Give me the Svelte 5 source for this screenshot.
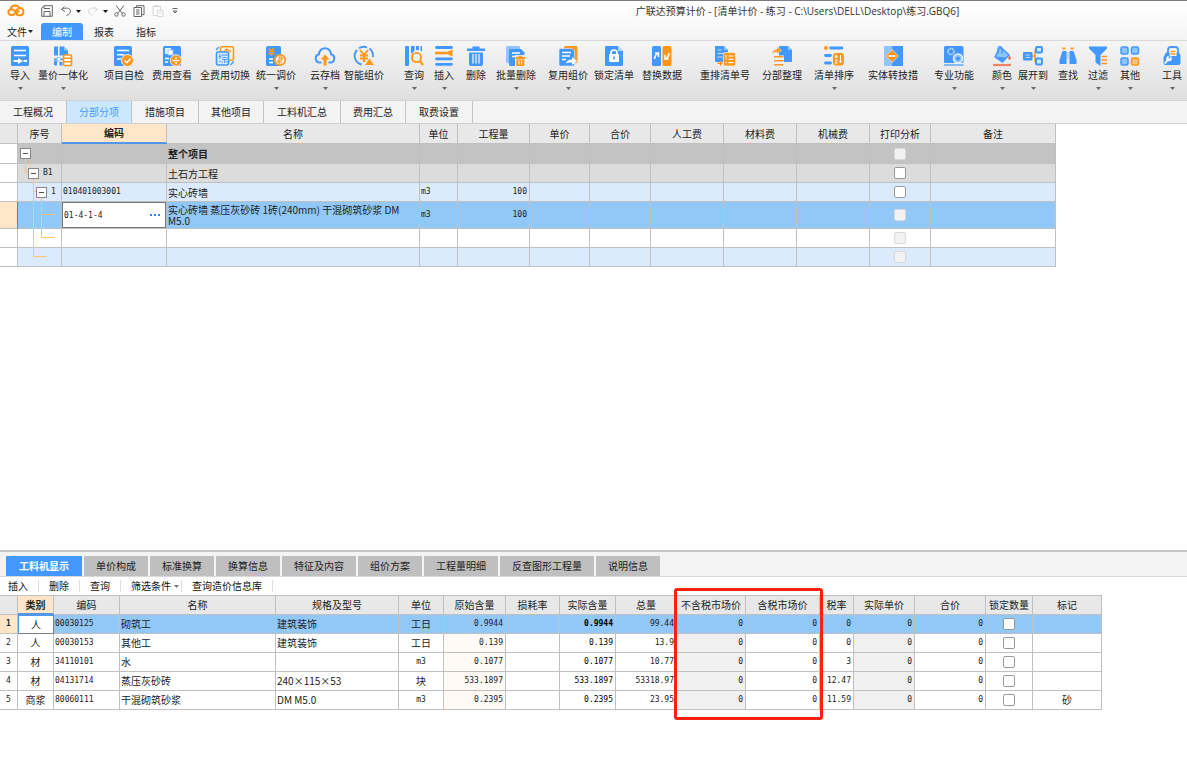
<script lang="ts">
	type Tool = { label: string; gap: number; menu?: boolean; icon: string };

	const B = '#4398ff';
	const O = '#ff981a';
	const L = '#8fc5ff';

	// icons are drawn on a 20 x 20 grid
	const tools: Tool[] = [
		{
			label: '导入', gap: 10, menu: true,
			icon: `<rect x="1" width="18" height="20" rx="1.5" fill="${B}"/><path d="M4 4.500h12M4 9.500h12" stroke="#fff" stroke-width="1.400"/><path d="M3.500 15h5m5 0h3.500" stroke="#fff" stroke-width="1.800"/><path d="M8 12l5 3-5 3z" fill="#fff"/>`
		},
		{
			label: '量价一体化', gap: 8, menu: true,
			icon: `<path d="M1 1.500Q1 .5 2 .5h3v9H1zM6.500 .5h4.500l4 4v5H6.500zM1 14.500h3v5H2q-1 0-1-1zM6.500 16h3v3.500h-3z" fill="${B}"/><path d="M11 .5v4h4z" fill="${L}"/><path d="M1 13.300h3M7 13.300h3" stroke="${B}" stroke-width="1.600"/><rect x="4.200" y="11.500" width="3.200" height="3.600" fill="#fff" stroke="${L}" stroke-width=".8"/><rect x="10.500" y="9" width="8" height="10.500" rx="1" fill="#fff" stroke="${O}" stroke-width="1.600"/><path d="M10.500 12.300h8M10.500 15.800h8" stroke="${O}" stroke-width="1.500"/>`
		},
		{
			label: '项目自检', gap: 16,
			icon: `<rect x="0" width="18" height="20" rx="1.500" fill="${B}"/><path d="M3 4.500h12M3 8.800h7M3 13h4" stroke="#fff" stroke-width="1.400"/><circle cx="13.500" cy="14.500" r="6" fill="${O}" stroke="#f0f0f0"/><path d="M10.700 14.500l2.100 2.200 3.700-4" fill="none" stroke="#fff" stroke-width="1.500"/>`
		},
		{
			label: '费用查看', gap: 8,
			icon: `<rect x="1" width="18" height="20" rx="1.500" fill="${B}"/><rect x="3" y="2" width="6" height="6" fill="#e6f2ff"/><rect x="6" y="4" width="5" height="5" fill="#fff" stroke="${L}" stroke-width=".8"/><path d="M3 12.500h4M3 16h3" stroke="#fff" stroke-width="1.400"/><circle cx="14" cy="14.500" r="5.700" fill="${O}" stroke="#f0f0f0"/><path d="M10.500 14.500h7" stroke="#fff" stroke-width="1.300"/><circle cx="14" cy="12" r="1" fill="#fff"/><circle cx="14" cy="17" r="1" fill="#fff"/>`
		},
		{
			label: '全费用切换', gap: 8,
			icon: `<rect x="5.500" y=".8" width="13" height="13.500" rx="1.500" fill="#fff3e0" stroke="${O}" stroke-width="1.600"/><path d="M8 6l4-3 4 3M12 4v6M9.500 7h5" fill="none" stroke="${O}" stroke-width="1.300"/><rect x="1.500" y="6" width="12" height="13" rx="1.500" fill="#d9ebff" stroke="${B}" stroke-width="1.600"/><path d="M5.500 8l-1.500 2.500h2L4 13M4 16l2-1M7 10V9h5v1M7.500 11.500h4M7 13.500h5.500M9.700 13.500V17M7.500 15.500L7 17m4.500-1.500l.8 1.500" fill="none" stroke="${B}" stroke-width="1"/><path d="M1 4L4 1M15.500 19l3.300-3.500" stroke="${B}" stroke-width="1.400"/>`
		},
		{
			label: '统一调价', gap: 6, menu: true,
			icon: `<rect x="0" width="15" height="20" rx="1.500" fill="${B}"/><path d="M3 2l2.500 3L8 2M2.500 5.500h6M2.500 7.800h6M5.500 5v5" fill="none" stroke="${O}" stroke-width="1.500"/><path d="M3 13h4M3 16.500h4" stroke="#fff" stroke-width="1.400"/><circle cx="14" cy="14" r="5.200" fill="#fff" stroke="${O}" stroke-width="1.800"/><path d="M13.200 10.500V17l-2.200-2.500M15 17.500V11l2.200 2.500" fill="none" stroke="${O}" stroke-width="1.300"/>`
		},
		{
			label: '云存档', gap: 14, menu: true,
			icon: `<path d="M6.500 16.500H5A4.200 4.200 0 0 1 4 8.200a6 6 0 0 1 12 0 4.200 4.200 0 0 1-1 8.300h-1.500" fill="none" stroke="${B}" stroke-width="2"/><path d="M10 8.500l4.300 5H11.500v6h-3v-6H5.700z" fill="${O}"/>`
		},
		{
			label: '智能组价', gap: 4,
			icon: `<path d="M7.500 18.500A8.800 8.800 0 0 1 3 4M5 2.300A9 9 0 0 1 13 1.300M15.500 2.500A9 9 0 0 1 18.800 11" fill="none" stroke="${B}" stroke-width="1.900"/><path d="M6 4l4 5 4-5M6 9.500h8M6 12.500h8M10 9v7" fill="none" stroke="${O}" stroke-width="2"/><path d="M15.500 12.500L20 19h-9z" fill="${O}"/>`
		},
		{
			label: '查询', gap: 20, menu: true,
			icon: `<rect x="1" width="4" height="20" rx="1" fill="${B}"/><path d="M7 0h3.500v5L7 8zM12 0h3v4h-3zM16.500 0H18v5.500l-1.500-.8z" fill="${B}"/><circle cx="12.500" cy="11.500" r="4.600" fill="none" stroke="${O}" stroke-width="1.900"/><path d="M15.800 15l3.200 4" stroke="${O}" stroke-width="2.400"/>`
		},
		{
			label: '插入', gap: 10, menu: true,
			icon: `<path d="M2.500 1.500h15M2.500 12.800h15M2.500 18.300h15" stroke="${B}" stroke-width="2.800" stroke-linecap="round"/><path d="M1 7h11" stroke="${O}" stroke-width="2.600"/><path d="M10.500 7L18.500 3.500v7z" fill="${O}"/>`
		},
		{
			label: '删除', gap: 12,
			icon: `<path d="M1 2.500h5.500V.5h7v2H19V5H1zM3 6.500h14V18q0 2-2 2H5q-2 0-2-2z" fill="${B}"/><path d="M7 8v9.500M10 8v9.500M13 8v9.500" stroke="#eef5ff" stroke-width="1.300"/>`
		},
		{
			label: '批量删除', gap: 10, menu: true,
			icon: `<rect x="0" width="14" height="17" rx="1.500" fill="${L}"/><path d="M3 3h12l3.500 3.500V20H4.500Q3 20 3 18.500z" fill="${B}"/><path d="M6 7h8M6 10.500h3" stroke="#fff" stroke-width="1.300"/><rect x="9" y="9" width="10.500" height="11" fill="#eee"/><path d="M9.500 11h3V9.800h3.500V11h3v2H9.500zM10.300 13.500h8V20h-8z" fill="${O}"/><path d="M13 14.500v4M15.500 14.500v4" stroke="#fff" stroke-width="1"/>`
		},
		{
			label: '复用组价', gap: 12, menu: true,
			icon: `<rect x="6" width="13.500" height="17" rx="1.500" fill="${O}"/><path d="M1 4q0-1.500 1.500-1.500H14L16.500 5v15h-14Q1 20 1 18.500z" fill="${B}" stroke="#f0f0f0" stroke-width=".6"/><path d="M4 6.500h9M4 10h8M4 13.500h4" stroke="#fff" stroke-width="1.300"/><path d="M8 17.500q1-4 6-4V11l5 4-5 4v-2.500q-3.500-.5-6 1z" fill="#fff"/>`
		},
		{
			label: '锁定清单', gap: 6,
			icon: `<path d="M2 0h12l5 5v14q0 1-1 1H2q-1 0-1-1V1q0-1 1-1z" fill="${B}"/><path d="M14 0l5 5h-5z" fill="#b7d9ff"/><rect x="5" y="8" width="10" height="8" rx="1" fill="#fff"/><path d="M7 8.500V7a3 3 0 0 1 6 0v1.500" fill="none" stroke="#fff" stroke-width="1.700"/><path d="M10 10.500v3" stroke="${B}" stroke-width="1.600"/>`
		},
		{
			label: '替换数据', gap: 8,
			icon: `<rect x="0" width="9" height="20" rx="1.500" fill="${B}"/><rect x="10.500" width="9" height="20" rx="1.500" fill="${O}"/><path d="M2.500 13q0-3.500 3-5.500M3 7h3.500v4" fill="none" stroke="#fff" stroke-width="1.500"/><path d="M17 7q0 3.500-3 5.500M16.500 13H13V9" fill="none" stroke="#fff" stroke-width="1.500"/>`
		},
		{
			label: '重排清单号', gap: 18,
			icon: `<path d="M0 0h9l4 4v12H1q-1 0-1-1z" fill="${B}"/><path d="M9 0v4h4z" fill="${L}"/><path d="M2.500 4h4M2.500 7.500h6M2.500 11h5" stroke="#cde4ff" stroke-width="1.200"/><rect x="8.500" y="6.500" width="12" height="13.500" rx="1.500" fill="${O}" stroke="#f0f0f0" stroke-width=".7"/><path d="M13.500 10h5M13.500 13.300h5M13.500 16.600h5M11 9v2.500M10.500 13h1.500m-1.500 3.500H12" stroke="#fff" stroke-width="1.100"/><path d="M2.500 16.500h2.500V14.500l3 3-3 2.500v-2H2.500z" fill="${O}"/>`
		},
		{
			label: '分部整理', gap: 12,
			icon: `<path d="M8 0h8l4 4v11q0 1-1 1H8q-1 0-1-1V1q0-1 1-1z" fill="${B}"/><path d="M16 0l4 4h-4z" fill="${L}"/><path d="M0 8q.5-4.500 5-5V.5L9.500 4.500 5 8V6Q2.500 6 0 8z" fill="${O}" stroke="#f0f0f0" stroke-width=".5"/><rect x="1" y="9.500" width="11" height="10.500" fill="#f0f0f0"/><path d="M2 10.800h9.500M2 14.800h9.500M2 18.800h9.500" stroke="${O}" stroke-width="1.600"/>`
		},
		{
			label: '清单排序', gap: 12, menu: true,
			icon: `<circle cx="2" cy="2" r="2" fill="${O}"/><path d="M6.500 2H18" stroke="${B}" stroke-width="2.800" stroke-linecap="round"/><path d="M1.500 9.500h5M1.500 17h5" stroke="${B}" stroke-width="2.800" stroke-linecap="round"/><rect x="9" y="7" width="11" height="12.500" rx="3" fill="${O}"/><path d="M11 12l1.200-3 1.200 3M11.200 11h2M11 14h2.400L11 17.200h2.500M16.500 9v7.500m-1.200-1.500l1.200 1.800 1.200-1.800" fill="none" stroke="#fff" stroke-width="1"/>`
		},
		{
			label: '实体转技措', gap: 14,
			icon: `<rect x="1" width="10" height="20" rx="1" fill="${L}"/><path d="M9 0h11v20H9z" fill="${B}"/><path d="M9 3.500L15.500 10 9 16.500 2.500 10z" fill="${O}" stroke="#d7eaff" stroke-width=".8"/><path d="M5.500 10h7" stroke="#fff" stroke-width="1.500"/>`
		},
		{
			label: '专业功能', gap: 16, menu: true,
			icon: `<rect x="0" width="19.500" height="17" rx="1.500" fill="${B}"/><path d="M0 19h19.500" stroke="${B}" stroke-width="1.200"/><circle cx="7" cy="5.500" r="3" fill="none" stroke="#c7e1ff" stroke-width="1.500" stroke-dasharray="1.800 .7"/><circle cx="14" cy="12.500" r="4.500" fill="${L}" stroke="#e8f3ff" stroke-width="1.500"/><circle cx="14" cy="12.500" r="2" fill="${B}"/>`
		},
		{
			label: '颜色', gap: 18, menu: true,
			icon: `<path d="M7 3l2-1.500 8 7.500-6.500 7L3 11z" fill="${L}" stroke="${B}" stroke-width="1.500"/><path d="M4 10.500l10 1-4 4z" fill="${B}"/><path d="M6 8V3A2 2 0 0 1 10 2.500V8" fill="none" stroke="${B}" stroke-width="1.300"/><path d="M17.500 10q2 3 0 3.500-2-.5 0-3.500z" fill="#f4704c" stroke="#f4704c"/><path d="M1 19h18" stroke="#f58263" stroke-width="2.200"/>`
		},
		{
			label: '展开到', gap: 6, menu: true,
			icon: `<path d="M9 10h3V4.500h2M12 10v5.500h2" fill="none" stroke="${O}" stroke-width="1.500"/><rect x="0" y="6" width="9.500" height="8.500" rx="1" fill="${B}"/><path d="M2.500 9h4.500M2.500 11.500h4.500" stroke="#b9d9ff"/><rect x="13" y="1" width="6" height="5.500" rx="1" fill="#cfe6ff" stroke="${B}" stroke-width="2"/><rect x="13" y="12.500" width="6" height="6" rx="1" fill="#cfe6ff" stroke="${B}" stroke-width="2"/>`
		},
		{
			label: '查找', gap: 10,
			icon: `<path d="M4.500 2.500h3M12.500 2.500h3" stroke="${O}" stroke-width="2"/><path d="M4.500 5h4v13H1.500v-4zM11.500 5h4l3 9v4h-7z" fill="${B}"/><path d="M9 6v7M11 6v7" stroke="${L}"/>`
		},
		{
			label: '过滤', gap: 10, menu: true,
			icon: `<path d="M1 .5h18v2L12.500 9v11l-5-3.500V9L1 2.500z" fill="${B}"/><path d="M13.500 10.500h5.500M13.500 14h5.500M13.500 17.500h5.500" stroke="${O}" stroke-width="1.500"/>`
		},
		{
			label: '其他', gap: 12, menu: true,
			icon: `<g fill="${L}" stroke="${B}" stroke-width="1.500"><rect x="1" y="1" width="7" height="7" rx="1.500"/><rect x="11.500" y="1" width="7" height="7" rx="1.500"/><rect x="1" y="12" width="7" height="7" rx="1.500"/></g><rect x="11.500" y="12" width="7" height="7" rx="1.500" fill="#ffc277" stroke="${O}" stroke-width="1.500"/>`
		},
		{
			label: '工具', gap: 22, menu: true,
			icon: `<path d="M6 8V4a3 3 0 0 1 3-3h4a3 3 0 0 1 3 3v4" fill="none" stroke="${B}" stroke-width="1.800"/><path d="M4 6.500h13l1.500 3V17q0 2-2 2H3.500q-2 0-2-2v-6z" fill="${B}"/><rect x="7.500" y="3.500" width="7" height="6.500" fill="#fff"/><path d="M8.500 5.500h5M8.500 8h5" stroke="${O}" stroke-width="1.300"/><circle cx="7" cy="12.500" r="2.700" fill="#fff"/><path d="M6 13.500L2.800 17.500" stroke="#fff" stroke-width="2"/><path d="M7.500 9.500v3" stroke="${B}" stroke-width="1.500"/>`
		}
	];

	const menus = ['编制', '报表', '指标'];
	const docTabs = ['工程概况', '分部分项', '措施项目', '其他项目', '工料机汇总', '费用汇总', '取费设置'];
	const detailTabs = ['工料机显示', '单价构成', '标准换算', '换算信息', '特征及内容', '组价方案', '工程量明细', '反查图形工程量', '说明信息'];

	let menu = $state('编制');
	let docTab = $state('分部分项');
	let detailTab = $state('工料机显示');
	let code = $state('01-4-1-4');

	const billCols = [18, 44, 105, 253, 38, 72, 60, 61, 73, 73, 73, 61, 125];
	const billHeads = ['', '序号', '编码', '名称', '单位', '工程量', '单价', '合价', '人工费', '材料费', '机械费', '打印分析', '备注'];

	const bill = [
		{ kind: 'root', level: 0, no: '', code: '', name: '整个项目', unit: '', qty: '', open: true, print: false, tree: 'M7.5 15V20' },
		{ kind: 'part', level: 1, no: 'B1', code: '', name: '土石方工程', unit: '', qty: '', open: true, print: true, tree: 'M7.5 0V8.500H10M15.500 14V19' },
		{ kind: 'item', level: 2, no: '1', code: '010401003001', name: '实心砖墙', unit: 'm3', qty: '100', open: true, print: true, tree: 'M15.500 0V19M15.500 8.500H19M23.500 14V19' },
		{ kind: 'selected', level: 3, no: '', code: '', name: '实心砖墙 蒸压灰砂砖 1砖(240mm) 干混砌筑砂浆 DM\nM5.0', unit: 'm3', qty: '100', open: false, print: false, tree: 'M15.500 0V27M23.500 0V27M23.500 12.500H37' },
		{ kind: 'blank', level: 3, no: '', code: '', name: '', unit: '', qty: '', open: false, print: false, tree: 'M15.500 0V19M23.500 0V8.500H37' },
		{ kind: 'item', level: 2, no: '', code: '', name: '', unit: '', qty: '', open: false, print: false, tree: 'M15.500 0V8.500H29' }
	];

	const resCols = [18, 36, 66, 156, 123, 45, 62, 54, 56, 61, 69, 74, 34, 61, 71, 47, 69];
	const resHeads = ['', '类别', '编码', '名称', '规格及型号', '单位', '原始含量', '损耗率', '实际含量', '总量', '不含税市场价', '含税市场价', '税率', '实际单价', '合价', '锁定数量', '标记'];

	const resources = [
		{ type: '人', code: '00030125', name: '砌筑工', spec: '建筑装饰', unit: '工日', raw: '0.9944', total: '99.44', tax: '0', mark: '' },
		{ type: '人', code: '00030153', name: '其他工', spec: '建筑装饰', unit: '工日', raw: '0.139', total: '13.9', tax: '0', mark: '' },
		{ type: '材', code: '34110101', name: '水', spec: '', unit: 'm3', raw: '0.1077', total: '10.77', tax: '3', mark: '' },
		{ type: '材', code: '04131714', name: '蒸压灰砂砖', spec: '240×115×53', unit: '块', raw: '533.1897', total: '53318.97', tax: '12.47', mark: '' },
		{ type: '商浆', code: '80060111', name: '干混砌筑砂浆', spec: 'DM M5.0', unit: 'm3', raw: '0.2395', total: '23.95', tax: '11.59', mark: '砂' }
	];
</script>

<svelte:head>
	<title>广联达预算计价</title>
</svelte:head>

{#snippet caret()}
	<svg class="caret" viewBox="0 0 5 3" aria-hidden="true"><path d="M0 0h5L2.5 3z" fill="currentColor" /></svg>
{/snippet}

<div class="app">
	<header class="chrome">
		<div class="titlebar">
			<svg class="logo" viewBox="0 0 18 14" aria-label="广联达">
				<path d="M5 11H4A2.800 2.800 0 0 1 3.500 5.500a4.800 4.800 0 0 1 9-1.500 3.700 3.700 0 0 1 1 7.300h-2q-1.800 0-1.800-1.800 0-1 2.300-2.500M3.500 5.500q2.500-.5 3.500 1t2.500-.5q1.500-1.200 3-2M5 11q2 .3 2.800-1.500L9.500 6" fill="none" stroke="#ff9213" stroke-width="2" stroke-linecap="round" />
			</svg>
			<div class="quick">
				<button type="button" aria-label="保存">
					<svg viewBox="0 0 12 12"><path d="M1 3L3 .7h8.300v10.600H.7V3zM3 .7v2.800h6M3 11V6.500h6V11" /></svg>
				</button>
				<button type="button" class="split" aria-label="撤销">
					<svg viewBox="0 0 12 12"><path d="M4.500 1.500L1.500 4.500l3.500 2M1.500 4.500C6 2 10 3 10.500 6c.2 2-1.500 3.500-4 4.500" /></svg>
				</button>
				<button type="button" class="drop" aria-label="撤销列表">{@render caret()}</button>
				<button type="button" class="split off" aria-label="恢复">
					<svg viewBox="0 0 12 12"><path d="M7.500 1.500l3 3-3.500 2M10.500 4.500C6 2 2 3 1.500 6c-.2 2 1.500 3.500 4 4.500" /></svg>
				</button>
				<button type="button" class="drop" aria-label="恢复列表">{@render caret()}</button>
				<button type="button" aria-label="剪切">
					<svg viewBox="0 0 12 12"><path d="M2 .5l6.500 8M10 .5l-6.500 8" /><circle cx="2.500" cy="9.500" r="1.700" /><circle cx="9.500" cy="9.500" r="1.700" /></svg>
				</button>
				<button type="button" aria-label="复制">
					<svg viewBox="0 0 12 12"><path d="M3.500 2.500V.7H11v9H9M1 2.500h7.500v9H1zM3 5h3.500M3 7h3.500M3 9h3.500" /></svg>
				</button>
				<button type="button" class="off" aria-label="粘贴">
					<svg viewBox="0 0 12 12"><path d="M5 10.500H1v-9h7.500V5M3 1.500V.5h3.500v1M5.500 5.500H11v6H5.500zM7 8h2.500" /></svg>
				</button>
				<button type="button" class="more" aria-label="自定义">
					<svg viewBox="0 0 8 8"><path d="M1.500 1.500h5M2 4h4L4 6z" /></svg>
				</button>
			</div>
			<h1>广联达预算计价 - [清单计价 - 练习 - C:\Users\DELL\Desktop\练习.GBQ6]</h1>
		</div>

		<nav class="menubar">
			<button type="button" class="file">文件{@render caret()}</button>
			{#each menus as m (m)}
				<button type="button" class="menu" class:active={menu === m} onclick={() => (menu = m)}>{m}</button>
			{/each}
		</nav>

		<div class="ribbon">
			{#each tools as t (t.label)}
				<button type="button" class="tool" style:margin-left="{t.gap}px">
					<svg class="icon" viewBox="0 0 20 20" aria-hidden="true">{@html t.icon}</svg>
					<span>{t.label}</span>
					{#if t.menu}{@render caret()}{/if}
				</button>
			{/each}
		</div>
	</header>

	<nav class="doc-tabs">
		{#each docTabs as t (t)}
			<button type="button" class:active={docTab === t} onclick={() => (docTab = t)}>{t}</button>
		{/each}
	</nav>

	<main class="bill">
		<table>
			<colgroup>
				{#each billCols as w}<col style:width="{w}px" />{/each}
			</colgroup>
			<thead>
				<tr>
					{#each billHeads as h}
						<th class:current={h === '编码'}>{h}</th>
					{/each}
				</tr>
			</thead>
			<tbody>
				{#each bill as r}
					<tr class={r.kind}>
						<td class="gutter"></td>
						<td class="tree">
							<div class="node">
								<svg class="lines" viewBox="0 0 43 {r.kind === 'selected' ? 26 : 18}" aria-hidden="true"><path d={r.tree} /></svg>
								<div class="node-label level-{r.level}">
									{#if r.open}<button type="button" class="toggle" aria-label="折叠"></button>{/if}
									<span class="num">{r.no}</span>
								</div>
							</div>
						</td>
						{#if r.kind === 'selected'}
							<td class="editing">
								<div class="editor">
									<input class="num" type="text" aria-label="编码" bind:value={code} />
									<button type="button" aria-label="选择编码">
										<svg viewBox="0 0 10 2"><path d="M0 0h2v2H0zM4 0h2v2H4zM8 0h2v2H8z" fill="#2b8be0" /></svg>
									</button>
								</div>
							</td>
						{:else}
							<td class="num">{r.code}</td>
						{/if}
						<td class="name">{r.name}</td>
						<td class="num">{r.unit}</td>
						<td class="num right">{r.qty}</td>
						<td></td>
						<td></td>
						<td></td>
						<td></td>
						<td></td>
						<td class="center"><input type="checkbox" aria-label="打印分析" disabled={!r.print} /></td>
						<td></td>
					</tr>
				{/each}
			</tbody>
		</table>
	</main>

	<section class="detail">
		<nav class="detail-tabs">
			{#each detailTabs as t (t)}
				<button type="button" class:active={detailTab === t} onclick={() => (detailTab = t)}>{t}</button>
			{/each}
		</nav>
		<div class="actions">
			<button type="button">插入</button>
			<button type="button">删除</button>
			<button type="button">查询</button>
			<button type="button" class="filter">筛选条件{@render caret()}</button>
			<button type="button">查询造价信息库</button>
		</div>
		<div class="resources">
			<table>
				<colgroup>
					{#each resCols as w}<col style:width="{w}px" />{/each}
				</colgroup>
				<thead>
					<tr>
						{#each resHeads as h}
							<th class:current={h === '类别'}>{h}</th>
						{/each}
					</tr>
				</thead>
				<tbody>
					{#each resources as r, i}
						<tr class:selected={i === 0}>
							<td class="gutter num center">{i + 1}</td>
							<td class="center" class:focus={i === 0}>{r.type}</td>
							<td class="num">{r.code}</td>
							<td>{r.name}</td>
							<td>{r.spec}</td>
							<td class="center" class:num={r.unit === 'm3'}>{r.unit}</td>
							<td class="num right cream">{r.raw}</td>
							<td></td>
							<td class="num right actual">{r.raw}</td>
							<td class="num right">{r.total}</td>
							<td class="num right locked">0</td>
							<td class="num right">0</td>
							<td class="num right">{r.tax}</td>
							<td class="num right locked">0</td>
							<td class="num right">0</td>
							<td class="center"><input type="checkbox" aria-label="锁定数量 {r.name}" /></td>
							<td class="center">{r.mark}</td>
						</tr>
					{/each}
				</tbody>
			</table>
			<div class="highlight"></div>
		</div>
	</section>
</div>

<style>
	:global(body) {
		margin: 0;
		background: #fff;
	}

	.app {
		display: flex;
		flex-direction: column;
		min-height: 100vh;
		font-family: 'Noto Sans CJK SC', sans-serif;
		font-size: 10px;
		line-height: 12px;
		color: #222;
		overflow: hidden;
	}

	button {
		margin: 0;
		padding: 0;
		border: 0;
		background: none;
		font: inherit;
		color: inherit;
		white-space: nowrap;
	}

	svg {
		display: block;
		flex: none;
	}

	.caret {
		width: 5px;
		height: 3px;
	}

	.chrome {
		border-top: 1px solid #7c7c80;
		background: linear-gradient(#fff, #f4f4f4 40px);
	}

	.titlebar {
		display: flex;
		align-items: center;
		height: 20px;
		padding-left: 7px;
	}

	.logo {
		width: 18px;
		height: 14px;
	}

	.quick {
		display: flex;
		align-items: center;
		margin-left: 16px;
	}

	.quick button {
		margin-right: 7px;
	}

	.quick button.split {
		margin-right: 4px;
	}

	.quick button.drop {
		margin-right: 6px;
		color: #111;
	}

	.quick svg:not(.caret) {
		width: 12px;
		height: 12px;
		fill: none;
		stroke: #666;
		stroke-width: 1;
	}

	.quick .off svg:not(.caret) {
		stroke: #d8d8d8;
	}

	.quick .more svg:not(.caret) {
		width: 8px;
		height: 8px;
	}

	h1 {
		flex: 1;
		margin: 0;
		padding-left: 222px;
		text-align: center;
		font-family: 'Open Sans', 'Noto Sans CJK SC', sans-serif;
		font-size: 10px;
		font-weight: 400;
		color: #333;
		white-space: nowrap;
	}

	.menubar {
		display: flex;
		align-items: flex-end;
		height: 19px;
		padding-left: 7px;
		border-bottom: 1px solid #d9d9d9;
	}

	.menubar button {
		height: 17px;
	}

	.menubar .file {
		display: flex;
		align-items: center;
		gap: 1px;
		margin-right: 8px;
	}

	.menubar .menu {
		padding: 0 11px;
	}

	.menubar .active {
		border-radius: 3px 3px 0 0;
		background: #4398ff;
		color: #fff;
	}

	.ribbon {
		display: flex;
		height: 59px;
		border-bottom: 1px solid #d4d4d4;
		background: linear-gradient(#f5f5f5, #dfdfdf);
	}

	.tool {
		display: flex;
		flex-direction: column;
		align-items: center;
		padding-top: 5px;
	}

	.tool span {
		margin: 3px 0 6px;
	}

	.icon {
		width: 20px;
		height: 20px;
		overflow: visible;
	}

	.tool .caret {
		color: #666;
	}

	.doc-tabs {
		display: flex;
		height: 22px;
		border-bottom: 1px solid #d0d0d0;
		background: #f3f3f3;
	}

	.doc-tabs button {
		padding: 0 13px;
		border-right: 1px solid #c4c4c4;
	}

	.doc-tabs button:nth-child(even) {
		padding: 0 12px;
	}

	.doc-tabs .active {
		background: #cce8ff;
		color: #4398ff;
	}

	.bill {
		flex: 1;
		overflow: hidden;
	}

	table {
		table-layout: fixed;
		width: 0;
		border-collapse: separate;
		border-spacing: 0;
	}

	th,
	td {
		box-sizing: border-box;
		height: 19px;
		padding: 0 2px 0 1px;
		border-right: 1px solid #c0c0c0;
		border-bottom: 1px solid #c0c0c0;
		text-align: left;
		vertical-align: middle;
		white-space: nowrap;
	}

	th {
		height: 20px;
		padding: 0;
		background: #e8e8e8;
		text-align: center;
		font-weight: 400;
	}

	th.current {
		border-bottom: 2px solid #4f97ea;
		background: #ffe6c8;
		font-weight: 700;
	}

	.num {
		font-family: 'DejaVu Sans Mono', 'Noto Sans CJK SC', monospace;
		font-size: 8px;
	}

	.right {
		text-align: right;
	}

	.center {
		padding: 0;
		text-align: center;
	}

	.gutter {
		background: #fff;
	}

	.root td {
		height: 20px;
	}

	.root td:not(.gutter) {
		background: #c3c3c3;
		font-weight: 700;
	}

	.part td:not(.gutter) {
		background: #dcdcdc;
	}

	.item td:not(.gutter) {
		background: #dceafe;
	}

	.selected td {
		background: #92c8f7;
	}

	.bill .selected td {
		height: 27px;
	}

	.selected .gutter {
		background: #ffe6c8;
		font-weight: 700;
	}

	.bill .selected .gutter {
		border-right-color: #3f86e0;
	}

	.name {
		line-height: 11px;
		white-space: pre-line;
	}

	.tree {
		padding: 0;
	}

	.node {
		display: grid;
		align-items: center;
	}

	.node > * {
		grid-area: 1 / 1;
	}

	.lines {
		width: 43px;
		overflow: visible;
		fill: none;
		stroke: #fbc47a;
	}

	.node-label {
		display: flex;
		align-items: center;
		gap: 4px;
	}

	.level-0 {
		padding-left: 2px;
	}

	.level-1 {
		padding-left: 10px;
	}

	.level-2 {
		padding-left: 18px;
	}

	.toggle {
		width: 11px;
		height: 11px;
		border: 1px solid #888;
		background: linear-gradient(#555, #555) center / 5px 1px no-repeat #fff;
	}

	.bill .editing {
		padding: 0;
	}

	.editor {
		display: flex;
		align-items: center;
		box-sizing: border-box;
		height: 26px;
		padding-right: 5px;
		border: 1px solid #777;
		background: #fff;
	}

	.editor input {
		flex: 1;
		min-width: 0;
		padding: 0 1px;
		border: 0;
		outline: 0;
		background: none;
		color: inherit;
	}

	.editor svg {
		width: 10px;
		height: 2px;
	}

	input[type='checkbox'] {
		appearance: none;
		display: block;
		width: 12px;
		height: 12px;
		margin: 0 auto;
		border: 1px solid #999;
		border-radius: 2px;
		background: #fff;
	}

	input[type='checkbox']:disabled {
		border-color: #d9d9d9;
		background: #f2f2f2;
	}

	.detail {
		box-sizing: border-box;
		min-height: 220px;
		border-top: 2px solid #c6c6c6;
	}

	.detail-tabs {
		display: flex;
		align-items: flex-end;
		gap: 2px;
		height: 24px;
		padding-left: 6px;
		border-bottom: 1px solid #d9d9d9;
		background: #f3f3f3;
	}

	.detail-tabs button {
		height: 20px;
		padding: 0 12px;
		border-radius: 1px 1px 0 0;
		background: #bfbfbf;
	}

	.detail-tabs .active {
		padding: 0 13px;
		background: #4398ff;
		color: #fff;
		font-weight: 700;
	}

	.actions {
		display: flex;
		align-items: center;
		height: 18px;
		color: #111;
	}

	.actions button {
		padding: 0 10px;
		border-right: 1px solid #ddd;
	}

	.actions button:first-child {
		padding-left: 8px;
	}

	.actions .filter {
		display: flex;
		align-items: center;
		gap: 3px;
		padding-right: 2px;
	}

	.actions .caret {
		color: #777;
	}

	.resources {
		position: relative;
	}

	.resources th {
		border-top: 1px solid #c0c0c0;
	}

	.cream {
		background: #fffaf5;
	}

	.actual {
		color: #000;
	}

	.selected .actual {
		font-weight: 700;
	}

	.locked {
		background: #f0f0f0;
	}

	.selected .focus {
		border: 1px solid #808080;
		border-top-color: #4f97ea;
		border-left-color: #4f97ea;
		background: #fff;
	}

	/* marks the two market price columns */
	.highlight {
		position: absolute;
		top: -7px;
		left: 674px;
		box-sizing: border-box;
		width: 149px;
		height: 132px;
		border: 3px solid #ff2010;
		border-radius: 3px;
		pointer-events: none;
	}
</style>
